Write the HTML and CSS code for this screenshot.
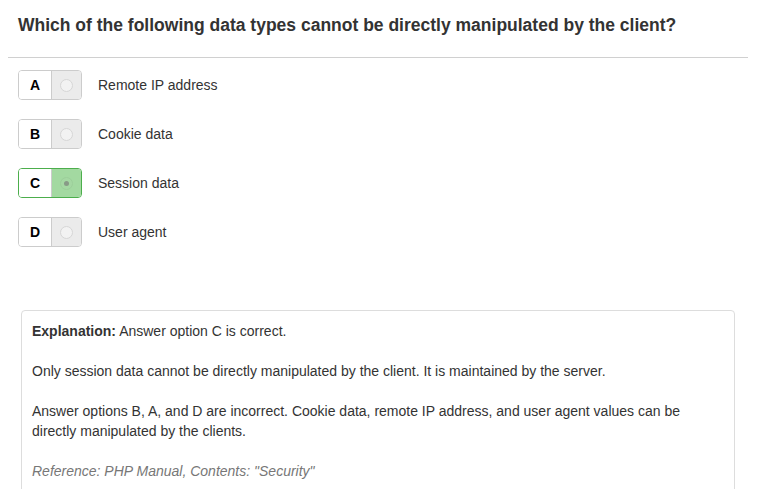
FILE: index.html
```html
<!DOCTYPE html>
<html>
<head>
<meta charset="utf-8">
<link rel="stylesheet" href="styles.css">
</head>
<body>
<div class="page">
  <h4 class="question">Which of the following data types cannot be directly manipulated by the client?</h4>
  <hr class="sep">
  <div class="options">
    <div class="option">
      <div class="btn-group"><span class="letter">A</span><span class="radio-wrap"><span class="radio"></span></span></div>
      <span class="label">Remote IP address</span>
    </div>
    <div class="option">
      <div class="btn-group"><span class="letter">B</span><span class="radio-wrap"><span class="radio"></span></span></div>
      <span class="label">Cookie data</span>
    </div>
    <div class="option selected">
      <div class="btn-group"><span class="letter">C</span><span class="radio-wrap"><span class="radio"></span></span></div>
      <span class="label">Session data</span>
    </div>
    <div class="option">
      <div class="btn-group"><span class="letter">D</span><span class="radio-wrap"><span class="radio"></span></span></div>
      <span class="label">User agent</span>
    </div>
  </div>
  <div class="explanation">
    <p><b>Explanation:</b> Answer option C is correct.</p>
    <p>Only session data cannot be directly manipulated by the client. It is maintained by the server.</p>
    <p>Answer options B, A, and D are incorrect. Cookie data, remote IP address, and user agent values can be directly manipulated by the clients.</p>
    <p class="ref">Reference: PHP Manual, Contents: "Security"</p>
  </div>
</div>
</body>
</html>
```

FILE: styles.css
```css
html, body {
  margin: 0;
  padding: 0;
  background: #fff;
}
body {
  font-family: "Liberation Sans", Arial, sans-serif;
  font-size: 14px;
  line-height: 20px;
  color: #333;
}
.page {
  padding: 0 9px 0 8px;
}
.question {
  margin: 0;
  padding: 13px 0 0 10px;
  font-size: 17.5px;
  line-height: 24px;
  font-weight: bold;
  color: #333;
}
.sep {
  margin: 20px 0 0 0;
  border: 0;
  border-top: 1px solid #d0d0d0;
  height: 0;
}
.options {
  padding: 12px 0 0 10px;
  display: flex;
  flex-direction: column;
  gap: 19px;
}
.option {
  display: flex;
  align-items: center;
  height: 30px;
}
.btn-group {
  display: flex;
  height: 30px;
  box-sizing: border-box;
  border: 1px solid #ccc;
  border-radius: 4px;
  overflow: hidden;
  width: 64px;
}
.letter {
  width: 32px;
  display: flex;
  align-items: center;
  justify-content: center;
  font-weight: bold;
  font-size: 14px;
  color: #000;
  background: #fff;
  border-right: 1px solid #ccc;
}
.radio-wrap {
  flex: 1;
  display: flex;
  align-items: center;
  justify-content: center;
  background: #ebebeb;
}
.radio {
  width: 13px;
  height: 13px;
  border-radius: 50%;
  border: 1px solid #d6d6d6;
  background: #f2f2f2;
  box-sizing: border-box;
  position: relative;
}
.selected .btn-group {
  border-color: #4cae4c;
}
.selected .letter {
  border-right-color: #ccc;
}
.selected .radio-wrap {
  background: #a3d9a1;
}
.selected .radio {
  background: #a5d8a3;
  border-color: #9ccf9a;
}
.selected .radio::after {
  content: "";
  position: absolute;
  left: 3px;
  top: 3px;
  width: 5px;
  height: 5px;
  border-radius: 50%;
  background: #889a87;
}
.label {
  margin-left: 16px;
  font-size: 14px;
}
.explanation {
  margin: 63px 13px 0 13px;
  border: 1px solid #ddd;
  border-radius: 4px;
  padding: 10px 10px 20px 10px;
}
.explanation p {
  margin: 0 0 20px 0;
}
.explanation b {
  font-weight: bold;
}
.explanation .ref {
  font-style: italic;
  color: #777;
}
```
